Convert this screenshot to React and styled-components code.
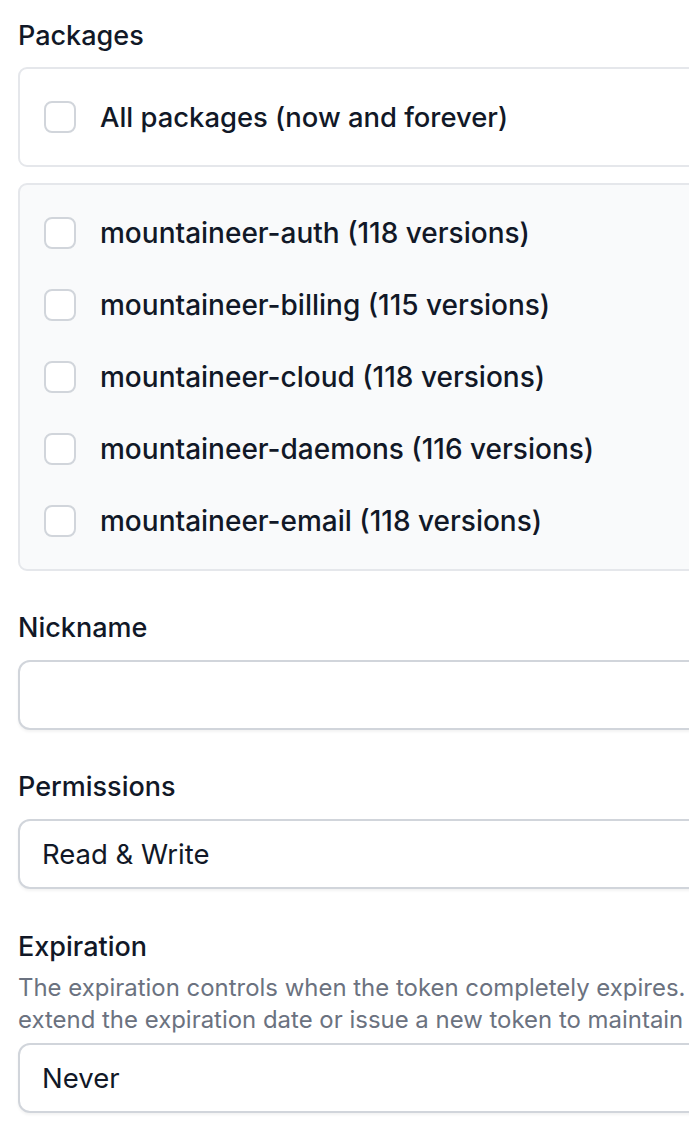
import React from "react";
import styled, { createGlobalStyle } from "styled-components";

const Global = createGlobalStyle`
  html, body {
    margin: 0;
    padding: 0;
    background: #ffffff;
    overflow: hidden;
  }
  body {
    font-family: Inter, "Noto Sans", "Liberation Sans", sans-serif;
    color: #111827;
    -webkit-font-smoothing: antialiased;
  }
`;

const Page = styled.form`
  width: 1000px;
  padding: 18px 0 40px 18px;
  display: flex;
  flex-direction: column;
  gap: 39px;
`;

const Field = styled.div`
  display: flex;
  flex-direction: column;
  margin-top: ${(p) => p.$offset ?? 0}px;
`;

const Label = styled.label`
  font-size: 27px;
  line-height: 36px;
  font-weight: 500;
  color: #111827;
  margin-bottom: ${(p) => p.$gap ?? 14}px;
`;

const Description = styled.p`
  margin: 0 0 7px;
  max-width: 890px;
  font-size: 23.95px;
  line-height: 32px;
  color: #6b7280;
`;

const Stack = styled.div`
  display: flex;
  flex-direction: column;
  gap: 16px;
`;

const Panel = styled.div`
  border: 2px solid #e5e7eb;
  border-radius: 9px;
  background: ${(p) => (p.$muted ? "#f9fafb" : "#ffffff")};
  padding: 32px 24px;
  display: flex;
  flex-direction: column;
  gap: 40px;
`;

const Option = styled.label`
  display: flex;
  align-items: center;
  gap: 24px;
  font-size: ${(p) => p.$size ?? 28}px;
  line-height: 32px;
  font-weight: 500;
  color: #111827;
`;

const Box = styled.span`
  width: 32px;
  height: 32px;
  box-sizing: border-box;
  border: 2px solid #d1d5db;
  border-radius: 8px;
  background: #ffffff;
  flex: none;
`;

const Input = styled.div`
  box-sizing: border-box;
  height: 70px;
  border: 2px solid #d1d5db;
  border-radius: 12px;
  background: #ffffff;
  box-shadow: 0 2px 3px rgba(0, 0, 0, 0.05);
  padding: 0 22px;
  display: flex;
  align-items: center;
  font-size: 27.5px;
  color: #111827;
`;

const packages = [
  "mountaineer-auth (118 versions)",
  "mountaineer-billing (115 versions)",
  "mountaineer-cloud (118 versions)",
  "mountaineer-daemons (116 versions)",
  "mountaineer-email (118 versions)",
];

export default function App() {
  return (
    <>
      <Global />
      <Page>
        <Field>
          <Label $gap={13}>Packages</Label>
          <Stack>
            <Panel>
              <Option $size={27.4}>
                <Box />
                All packages (now and forever)
              </Option>
            </Panel>
            <Panel $muted>
              {packages.map((p) => (
                <Option key={p}>
                  <Box />
                  {p}
                </Option>
              ))}
            </Panel>
          </Stack>
        </Field>
        <Field>
          <Label>Nickname</Label>
          <Input />
        </Field>
        <Field>
          <Label>Permissions</Label>
          <Input>Read &amp; Write</Input>
        </Field>
        <Field $offset={1}>
          <Label $gap={7}>Expiration</Label>
          <Description>
            The expiration controls when the token completely expires. You will need to
            extend the expiration date or issue a new token to maintain access.
          </Description>
          <Input>Never</Input>
        </Field>
      </Page>
    </>
  );
}
